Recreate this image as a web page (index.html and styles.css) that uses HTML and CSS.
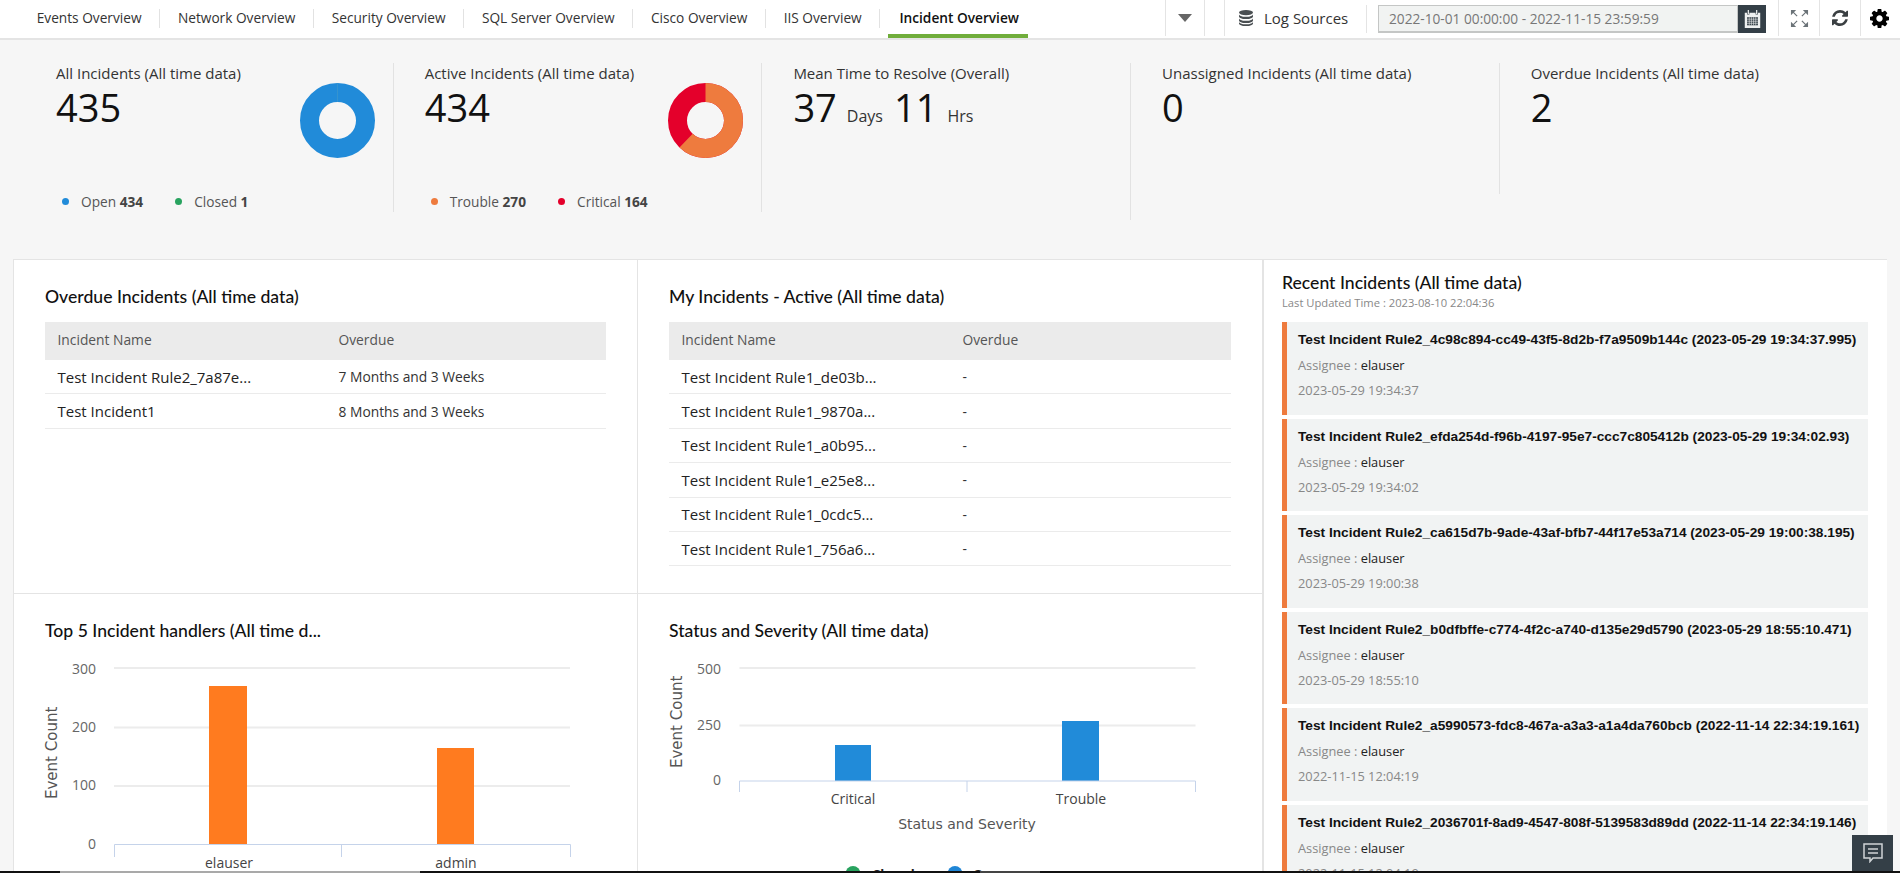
FILE: index.html
```html
<!DOCTYPE html>
<html lang="en">
<head>
<meta charset="utf-8">
<title>Incident Overview</title>
<link rel="stylesheet" href="styles.css">
</head>
<body>
<nav class="nav">
  <div class="tabs">
    <a class="tab">Events Overview</a><i class="tab-sep"></i>
    <a class="tab">Network Overview</a><i class="tab-sep"></i>
    <a class="tab">Security Overview</a><i class="tab-sep"></i>
    <a class="tab">SQL Server Overview</a><i class="tab-sep"></i>
    <a class="tab">Cisco Overview</a><i class="tab-sep"></i>
    <a class="tab">IIS Overview</a><i class="tab-sep"></i>
    <a class="tab tab-active">Incident Overview</a>
  </div>
  <div class="tools">
    <div class="tool tool-more"><i class="caret"></i></div>
    <div class="tool tool-gap"></div>
    <div class="tool tool-logs">
      <svg class="db" viewBox="0 0 14 16"><ellipse cx="7" cy="2.6" rx="7" ry="2.6"/><path d="M0 4.2v2.2C0 7.9 3.100 9 7 9s7-1.100 7-2.600V4.200C14 5.700 10.900 6.800 7 6.800S0 5.700 0 4.200z"/><path d="M0 8.200v2.200c0 1.500 3.100 2.600 7 2.600s7-1.100 7-2.600V8.200c0 1.500-3.100 2.600-7 2.600S0 9.700 0 8.200z"/><path d="M0 11.700v1.700C0 14.900 3.100 16 7 16s7-1.100 7-2.600v-1.700c0 1.500-3.100 2.600-7 2.600s-7-1.100-7-2.600z"/></svg>
      <span>Log Sources</span>
    </div>
    <div class="date-range">
      <div class="date-text">2022-10-01 00:00:00 - 2022-11-15 23:59:59</div>
      <div class="date-btn">
        <svg class="cal" viewBox="0 0 22 20" preserveAspectRatio="none"><path class="cal-body" d="M1 3h3v2h3V3h8v2h3V3h3v17H1z"/><rect class="cal-ring" x="4.800" y="0" width="1.600" height="4.500"/><rect class="cal-ring" x="15.600" y="0" width="1.600" height="4.500"/><g class="cal-grid"><rect x="4" y="8" width="14" height="9"/></g><path class="cal-lines" d="M4 10.200h14M4 12.500h14M4 14.800h14M6.800 8v9M9.600 8v9M12.400 8v9M15.200 8v9"/></svg>
      </div>
    </div>
    <div class="tool tool-icon">
      <svg class="ic-expand" viewBox="0 0 20 20"><path class="ex-head" d="M1 1h5.500L1 6.500zM19 1v5.500L13.500 1zM1 19v-5.500L6.500 19zM19 19h-5.500l5.500-5.500z"/><path class="ex-stem" d="M3 3l4.500 4.500M17 3l-4.500 4.500M3 17l4.500-4.500M17 17l-4.500-4.500"/></svg>
    </div>
    <div class="tool tool-icon">
      <svg class="ic-refresh" viewBox="0 0 1536 1536"><path d="M1511 928q0 5-1 7-64 268-268 434.500t-478 166.500q-146 0-282.500-55t-243.500-157l-129 129q-19 19-45 19t-45-19-19-45v-448q0-26 19-45t45-19h448q26 0 45 19t19 45-19 45l-137 137q71 66 161 102t187 36q134 0 250-65t186-179q11-17 53-117 8-23 30-23h192q13 0 22.500 9.500t9.500 22.500zm25-800v448q0 26-19 45t-45 19h-448q-26 0-45-19t-19-45 19-45l138-138q-148-137-349-137-134 0-250 65t-186 179q-11 17-53 117-8 23-30 23h-199q-13 0-22.500-9.500t-9.500-22.500v-7q65-268 270-434.500t480-166.500q146 0 284 55.500t245 156.500l130-129q19-19 45-19t45 19 19 45z"/></svg>
    </div>
    <div class="tool tool-icon tool-last">
      <svg class="ic-gear" viewBox="0 0 1536 1536"><path fill-rule="evenodd" d="M1024 768q0-106-75-181t-181-75-181 75-75 181 75 181 181 75 181-75 75-181zm512-109v222q0 12-8 23t-20 13l-185 28q-19 54-39 91 35 50 107 138 10 12 10 25t-9 23q-27 37-99 108t-94 71q-12 0-26-9l-138-108q-44 23-91 38-16 136-29 186-7 28-36 28h-222q-14 0-24.500-8.500t-11.500-21.500l-28-184q-49-16-90-37l-141 107q-10 9-25 9-14 0-25-11-126-114-165-168-7-10-7-23 0-12 8-23 15-21 51-66.500t54-70.500q-27-50-41-99l-183-27q-13-2-21-12.500t-8-23.500v-222q0-12 8-23t19-13l186-28q14-46 39-92-40-57-107-138-10-12-10-24 0-10 9-23 26-36 98.500-107.500t94.500-71.500q13 0 26 10l138 107q44-23 91-38 16-136 29-186 7-28 36-28h222q14 0 24.500 8.500t11.500 21.500l28 184q49 16 90 37l142-107q9-9 24-9 13 0 25 10 129 119 165 170 7 8 7 22 0 12-8 23-15 21-51 66.500t-54 70.500q26 50 41 98l183 28q13 2 21 12.500t8 23.500z"/></svg>
    </div>
  </div>
</nav>

<section class="summary">
  <div class="kpi kpi-a">
    <div class="kpi-main">
      <div>
        <div class="kpi-title">All Incidents (All time data)</div>
        <div class="kpi-num">435</div>
      </div>
      <svg class="donut" viewBox="0 0 75 75"><circle class="donut-open" cx="37.500" cy="37.500" r="28"/><path class="donut-closed" d="M37.500 0v19"/></svg>
    </div>
    <div class="legend">
      <span class="leg-item"><i class="dot dot-blue"></i>Open <b>434</b></span>
      <span class="leg-item"><i class="dot dot-green"></i>Closed <b>1</b></span>
    </div>
  </div>
  <div class="kpi kpi-a">
    <div class="kpi-main">
      <div>
        <div class="kpi-title">Active Incidents (All time data)</div>
        <div class="kpi-num">434</div>
      </div>
      <svg class="donut" viewBox="0 0 75 75"><circle class="donut-critical" cx="37.500" cy="37.500" r="28"/><circle class="donut-trouble" cx="37.500" cy="37.500" r="28" pathLength="434" stroke-dasharray="270 434" transform="rotate(-90 37.500 37.500)"/></svg>
    </div>
    <div class="legend">
      <span class="leg-item"><i class="dot dot-orange"></i>Trouble <b>270</b></span>
      <span class="leg-item"><i class="dot dot-red"></i>Critical <b>164</b></span>
    </div>
  </div>
  <div class="kpi kpi-b">
    <div class="kpi-title">Mean Time to Resolve (Overall)</div>
    <div class="kpi-num">37<small>Days</small>11<small>Hrs</small></div>
  </div>
  <div class="kpi kpi-c">
    <div class="kpi-title">Unassigned Incidents (All time data)</div>
    <div class="kpi-num">0</div>
  </div>
  <div class="kpi kpi-d">
    <div class="kpi-title">Overdue Incidents (All time data)</div>
    <div class="kpi-num">2</div>
  </div>
</section>

<main class="board">
  <div class="cell cell-top cell-left">
    <h2 class="cell-title">Overdue Incidents (All time data)</h2>
    <div class="tbl">
      <div class="tbl-head"><span>Incident Name</span><span>Overdue</span></div>
      <div class="tbl-row"><span class="name">Test Incident Rule2_7a87e...</span><span>7 Months and 3 Weeks</span></div>
      <div class="tbl-row"><span class="name">Test Incident1</span><span>8 Months and 3 Weeks</span></div>
    </div>
  </div>
  <div class="cell cell-top">
    <h2 class="cell-title">My Incidents - Active (All time data)</h2>
    <div class="tbl">
      <div class="tbl-head"><span>Incident Name</span><span>Overdue</span></div>
      <div class="tbl-row"><span class="name">Test Incident Rule1_de03b...</span><span>-</span></div>
      <div class="tbl-row"><span class="name">Test Incident Rule1_9870a...</span><span>-</span></div>
      <div class="tbl-row"><span class="name">Test Incident Rule1_a0b95...</span><span>-</span></div>
      <div class="tbl-row"><span class="name">Test Incident Rule1_e25e8...</span><span>-</span></div>
      <div class="tbl-row"><span class="name">Test Incident Rule1_0cdc5...</span><span>-</span></div>
      <div class="tbl-row"><span class="name">Test Incident Rule1_756a6...</span><span>-</span></div>
    </div>
  </div>
  <aside class="recent">
    <h2 class="recent-title">Recent Incidents (All time data)</h2>
    <div class="recent-sub">Last Updated Time : 2023-08-10 22:04:36</div>
    <div class="card"><div class="card-title">Test Incident Rule2_4c98c894-cc49-43f5-8d2b-f7a9509b144c (2023-05-29 19:34:37.995)</div><div class="card-line">Assignee : <span>elauser</span></div><div class="card-line">2023-05-29 19:34:37</div></div>
    <div class="card"><div class="card-title">Test Incident Rule2_efda254d-f96b-4197-95e7-ccc7c805412b (2023-05-29 19:34:02.93)</div><div class="card-line">Assignee : <span>elauser</span></div><div class="card-line">2023-05-29 19:34:02</div></div>
    <div class="card"><div class="card-title">Test Incident Rule2_ca615d7b-9ade-43af-bfb7-44f17e53a714 (2023-05-29 19:00:38.195)</div><div class="card-line">Assignee : <span>elauser</span></div><div class="card-line">2023-05-29 19:00:38</div></div>
    <div class="card"><div class="card-title">Test Incident Rule2_b0dfbffe-c774-4f2c-a740-d135e29d5790 (2023-05-29 18:55:10.471)</div><div class="card-line">Assignee : <span>elauser</span></div><div class="card-line">2023-05-29 18:55:10</div></div>
    <div class="card"><div class="card-title">Test Incident Rule2_a5990573-fdc8-467a-a3a3-a1a4da760bcb (2022-11-14 22:34:19.161)</div><div class="card-line">Assignee : <span>elauser</span></div><div class="card-line">2022-11-15 12:04:19</div></div>
    <div class="card"><div class="card-title">Test Incident Rule2_2036701f-8ad9-4547-808f-5139583d89dd (2022-11-14 22:34:19.146)</div><div class="card-line">Assignee : <span>elauser</span></div><div class="card-line">2022-11-15 12:04:19</div></div>
  </aside>
  <div class="cell cell-left">
    <h2 class="cell-title">Top 5 Incident handlers (All time d...</h2>
    <svg class="chart" viewBox="45 656 561 217">
      <path class="grid" d="M114 668H570M114 727.500H570M114 786H570"/>
      <rect class="bar-orange" x="209" y="686" width="38" height="158"/>
      <rect class="bar-orange" x="437" y="748" width="37" height="96"/>
      <path class="axis" d="M114.500 857V844.500H570.500V857M341.500 844.500V857"/>
      <g class="tick-y">
        <text x="96" y="674">300</text><text x="96" y="732">200</text><text x="96" y="790">100</text><text x="96" y="849">0</text>
      </g>
      <g class="tick-x"><text x="229" y="868">elauser</text><text x="456" y="868">admin</text></g>
      <text class="axis-title axis-y" transform="translate(57 799) rotate(-90)">Event Count</text>
    </svg>
  </div>
  <div class="cell">
    <h2 class="cell-title">Status and Severity (All time data)</h2>
    <svg class="chart" viewBox="669 656 561 217">
      <path class="grid" d="M739.500 668H1195.500M739.500 725.500H1195.500"/>
      <rect class="bar-blue" x="835" y="745" width="36" height="36"/>
      <rect class="bar-blue" x="1062" y="721" width="37" height="60"/>
      <path class="axis" d="M739.500 792V781H1195.500V792M967 781V792"/>
      <g class="tick-y">
        <text x="721" y="674">500</text><text x="721" y="730">250</text><text x="721" y="785">0</text>
      </g>
      <g class="tick-x"><text x="853" y="804">Critical</text><text x="1081" y="804">Trouble</text></g>
      <text class="axis-title axis-center" x="967" y="829">Status and Severity</text>
      <text class="axis-title axis-y" transform="translate(682 768) rotate(-90)">Event Count</text>
      <circle class="leg-closed" cx="853" cy="873.500" r="7.500"/>
      <text class="leg-text" x="872" y="879">Closed</text>
      <circle class="leg-open" cx="955" cy="873.500" r="7.500"/>
      <text class="leg-text" x="973" y="879">Open</text>
    </svg>
  </div>
</main>

<button class="chat" aria-label="Chat">
  <svg viewBox="0 0 20 20"><path class="chat-shape" d="M1 1h18v14h-9l-3 3.500V15H1z"/><path class="chat-lines" d="M5 6h10M5 10h10"/></svg>
</button>
<div class="winbar"><i class="wb-black wb-a"></i><i class="wb-light"></i><i class="wb-black wb-b"></i><i class="wb-grey"></i><i class="wb-black wb-c"></i></div>
</body>
</html>
```

FILE: styles.css
```css
* { box-sizing: border-box; }
html, body { margin: 0; }
body {
  height: 873px;
  overflow: hidden;
  background: #f6f6f6;
  font-family: "Open Sans", sans-serif;
  font-size: 13.800px;
  color: #222;
}

/* top navigation */
.nav {
  display: flex;
  justify-content: space-between;
  height: 40px;
  background: #fff;
  border-bottom: 2px solid #e4e4e4;
}
.tabs { display: flex; align-items: flex-start; padding-left: 19px; }
.tab {
  display: block;
  height: 36px;
  padding: 0 17.700px;
  font-size: 13.700px;
  line-height: 36px;
  color: #333;
  white-space: nowrap;
}
.tab-sep { width: 1px; height: 19px; margin-top: 9px; background: #e2e2e2; }
.tab-active {
  width: 140px;
  height: 38px;
  margin-left: 8px;
  padding: 0 11px;
  font-weight: 600;
  color: #111;
  border-bottom: 4px solid #70ad3b;
}
.tools { display: flex; height: 36px; padding-right: 2px; }
.tool {
  display: flex;
  align-items: center;
  justify-content: center;
  border-left: 1px solid #e4e4e4;
}
.tool-more { width: 39px; }
.tool-gap { width: 20px; }
.tool-logs { width: 142px; padding-left: 14px; justify-content: flex-start; font-size: 15px; color: #333; }
.caret { width: 0; height: 0; border: 7px solid transparent; border-top: 8px solid #666; border-bottom: 0; }
.db { width: 14px; height: 16px; margin-right: 11px; fill: #4a4f52; }
.date-range {
  display: flex;
  width: 400px;
  height: 28px;
  margin: 5px 12px 0 0;
  padding-left: 11px;
  border-left: 1px solid #e4e4e4;
}
.date-text {
  flex: 1;
  height: 28px;
  padding-left: 10px;
  font-size: 13.700px;
  line-height: 25px;
  color: #777;
  background: #f1f3f2;
  border: 1px solid #c4c6c5;
  border-bottom-width: 2px;
}
.date-btn { display: flex; align-items: center; justify-content: center; width: 28px; height: 28px; background: #343f47; }
.cal { width: 17px; height: 18px; }
.cal-body, .cal-ring { fill: #eef0f0; }
.cal-grid rect { fill: #343f47; }
.cal-lines { stroke: #eef0f0; stroke-width: .7; fill: none; }
.tool-icon { width: 41px; }
.tool-last { width: 38px; }
.ic-expand { width: 19px; height: 19px; }
.ex-head { fill: #6b7378; }
.ex-stem { stroke: #6b7378; stroke-width: 1.300; fill: none; }
.ic-refresh { width: 16px; height: 16px; fill: #3a3f42; }
.ic-gear { width: 19px; height: 19px; fill: #000; }

/* summary strip */
.summary {
  display: grid;
  grid-template-columns: repeat(5, 368.700px);
  align-items: start;
  height: 219px;
  padding: 23px 0 0 25px;
}
.kpi { padding-left: 31px; border-right: 1px solid #e2e2e2; }
.kpi-a { height: 149px; }
.kpi-b { height: 157px; }
.kpi-c { height: 131px; }
.kpi-d { border-right: 0; }
.kpi-main { display: flex; justify-content: space-between; height: 127px; padding-right: 18px; }
.kpi-title { height: 22px; line-height: 20px; font-size: 15px; color: #333; }
.kpi-num { height: 44px; line-height: 44px; font-size: 38px; color: #111; white-space: nowrap; }
.kpi-num small { margin: 0 11px 0 10px; font-size: 16px; color: #333; }
.donut { width: 75px; height: 75px; margin-top: 20px; }
.donut circle { fill: none; stroke-width: 19px; }
.donut-open { stroke: #218bd9; }
.donut-closed { stroke: #4a9bc4; stroke-width: .5; fill: none; }
.donut-critical { stroke: #e4002b; }
.donut-trouble { stroke: #ee7b3e; }
.legend { display: flex; padding-left: 6px; height: 22px; align-items: center; }
.leg-item { display: inline-flex; align-items: center; margin-right: 32px; white-space: pre; color: #555; font-size: 13.700px; }
.leg-item b { font-weight: 700; color: #444; }
.dot { width: 7px; height: 7px; border-radius: 50%; margin-right: 12px; }
.dot-blue { background: #218bd9; }
.dot-green { background: #28a35f; }
.dot-orange { background: #ee7b3e; }
.dot-red { background: #e4002b; }

/* board */
.board {
  display: grid;
  grid-template-columns: 625px 625px 625px;
  grid-template-rows: 335px 1fr;
  height: 614px;
  margin: 0 13px;
  overflow: hidden;
}
.cell {
  padding: 25px 31px 0;
  background: #fff;
  border-right: 1px solid #e4e4e4;
  border-bottom: 1px solid #e4e4e4;
}
.cell-left { border-left: 1px solid #e4e4e4; }
.cell-top { border-top: 1px solid #e4e4e4; }
.cell-title {
  margin: 0 0 13px;
  height: 24px;
  line-height: 24px;
  font-family: Lato, sans-serif;
  font-size: 17.600px;
  font-weight: 500;
  color: #111;
}
.tbl-head, .tbl-row { display: grid; grid-template-columns: 281px 1fr; align-items: center; padding-left: 12.500px; }
.tbl-head { height: 38px; padding-bottom: 3px; background: #ebebeb; color: #555; }
.tbl-row { height: 34.400px; border-bottom: 1px solid #ebebeb; color: #333; }
.name { font-size: 15px; color: #222; }

.chart { display: block; width: 561px; height: 217px; overflow: visible; }
.grid { stroke: #ececec; stroke-width: 2; fill: none; }
.bar-orange { fill: #ff7b1f; }
.bar-blue { fill: #218bd9; }
.axis { stroke: #c5d3ea; stroke-width: 1; fill: none; }
.tick-y text { font: 14px "Open Sans", sans-serif; fill: #666; text-anchor: end; }
.tick-x text { font: 14px "Open Sans", sans-serif; fill: #444; text-anchor: middle; }
.axis-title { font: 14px "DejaVu Sans", sans-serif; fill: #555; }
.axis-y { font-size: 15px; }
.axis-center { text-anchor: middle; }
.leg-closed { fill: #28a35f; }
.leg-open { fill: #1f86d6; }
.leg-text { font: 700 13px "Open Sans", sans-serif; fill: #222; }

/* recent incidents */
.recent {
  grid-column: 3;
  grid-row: 1 / span 2;
  padding: 11px 19px 0 18px;
  background: #fff;
  border: 1px solid #e4e4e4;
  border-bottom: 0;
  overflow: hidden;
}
.recent-title { margin: 0; height: 24px; line-height: 24px; font-family: Lato, sans-serif; font-size: 17.600px; font-weight: 500; color: #111; }
.recent-sub { height: 14px; margin: 1px 0 12px; line-height: 14px; font-size: 11.200px; color: #888; }
.card {
  height: 92.600px;
  margin-bottom: 4px;
  padding: 9px 6px 0 11px;
  background: #f1f3f3;
  border-left: 5px solid #ee7b3e;
}
.card-title { height: 18px; line-height: 18px; font-family: "Liberation Sans", sans-serif; font-size: 13.700px; font-weight: 700; color: #111; white-space: nowrap; }
.card-line { height: 25px; line-height: 25px; font-size: 12.800px; color: #888; }
.card-title + .card-line { margin-top: 4px; }
.card-line span { color: #222; }

/* overlays */
.chat {
  position: fixed;
  right: 7px;
  bottom: 2px;
  display: flex;
  align-items: center;
  justify-content: center;
  width: 41px;
  height: 36px;
  padding: 0;
  border: 0;
  background: #343f47;
}
.chat svg { width: 20px; height: 20px; }
.chat-shape, .chat-lines { fill: none; stroke: #cfd4d6; stroke-width: 1.500; }
.winbar { position: fixed; left: 0; right: 0; bottom: 0; display: flex; height: 2px; }
.winbar i { display: block; }
.wb-black { background: #111; }
.wb-a { width: 60px; }
.wb-light { width: 360px; background: #a9a9a9; }
.wb-b { width: 560px; }
.wb-grey { width: 60px; background: #444; }
.wb-c { flex: 1; }
```
